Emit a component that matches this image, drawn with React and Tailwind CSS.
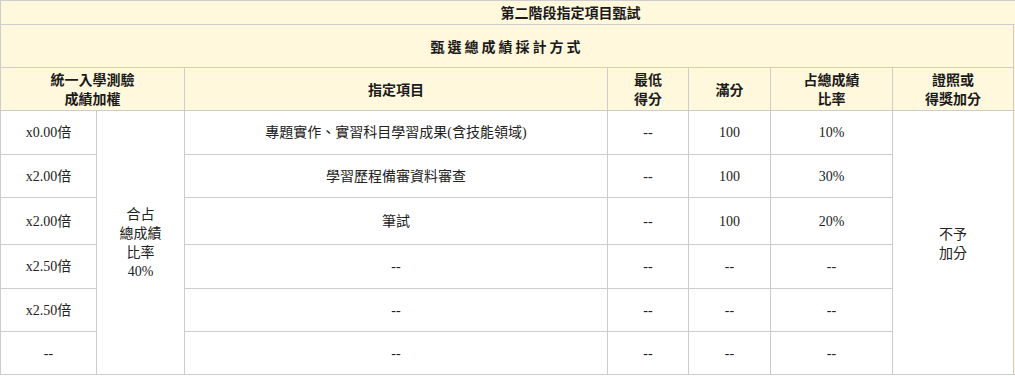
import React from "react";

const B = "border border-[#cccccc]";
const H = `${B} bg-[#fff8dc] font-bold text-[#1a1a1a] text-center align-middle`;
const C = `${B} bg-white text-center align-middle text-[#222]`;

const rows = [
  { w: "x0.00倍", item: "專題實作、實習科目學習成果(含技能領域)", min: "--", full: "100", pct: "10%", h: "h-[44px]" },
  { w: "x2.00倍", item: "學習歷程備審資料審查", min: "--", full: "100", pct: "30%", h: "h-[43px]" },
  { w: "x2.00倍", item: "筆試", min: "--", full: "100", pct: "20%", h: "h-[47px]" },
  { w: "x2.50倍", item: "--", min: "--", full: "--", pct: "--", h: "h-[44px]" },
  { w: "x2.50倍", item: "--", min: "--", full: "--", pct: "--", h: "h-[43px]" },
  { w: "--", item: "--", min: "--", full: "--", pct: "--", h: "h-[43px]" },
];

export default function App() {
  return (
    <div
      className="w-[1015px] h-[376px] overflow-hidden bg-white text-[14px] leading-[19px]"
      style={{ fontFamily: '"Liberation Serif", "Noto Sans CJK TC", serif' }}
    >
      <table className="table-fixed border-collapse w-[1140px]">
        <colgroup>
          <col className="w-[96px]" />
          <col className="w-[88px]" />
          <col className="w-[423px]" />
          <col className="w-[81px]" />
          <col className="w-[82px]" />
          <col className="w-[122px]" />
          <col className="w-[121px]" />
          <col className="w-[127px]" />
        </colgroup>
        <tbody>
          <tr>
            <td colSpan={8} className={`${H} h-[24px]`} style={{ fontFamily: '"Noto Sans CJK TC", sans-serif' }}>
              第二階段指定項目甄試
            </td>
          </tr>
          <tr>
            <td colSpan={7} className={`${H} h-[43px] tracking-[3px]`} style={{ fontFamily: '"Noto Sans CJK TC", sans-serif' }}>
              甄選總成績採計方式
            </td>
            <td rowSpan={2} className={H}></td>
          </tr>
          <tr style={{ fontFamily: '"Noto Sans CJK TC", sans-serif' }}>
            <td colSpan={2} className={`${H} h-[43px]`}>
              統一入學測驗
              <br />
              成績加權
            </td>
            <td className={H}>指定項目</td>
            <td className={H}>
              最低
              <br />
              得分
            </td>
            <td className={H}>滿分</td>
            <td className={H}>
              占總成績
              <br />
              比率
            </td>
            <td className={H}>
              證照或
              <br />
              得獎加分
            </td>
          </tr>
          {rows.map((r, i) => (
            <tr key={i}>
              <td className={`${C} ${r.h}`}>{r.w}</td>
              {i === 0 && (
                <td rowSpan={6} className={C} style={{ fontFamily: '"Noto Sans CJK TC", sans-serif' }}>
                  合占
                  <br />
                  總成績
                  <br />
                  比率
                  <br />
                  <span style={{ fontFamily: '"Liberation Serif", serif' }}>40%</span>
                </td>
              )}
              <td className={C}>{r.item}</td>
              <td className={C}>{r.min}</td>
              <td className={C}>{r.full}</td>
              <td className={C}>{r.pct}</td>
              {i === 0 && (
                <>
                  <td rowSpan={6} className={C} style={{ fontFamily: '"Noto Sans CJK TC", sans-serif' }}>
                    不予
                    <br />
                    加分
                  </td>
                  <td rowSpan={6} className={`${B} bg-[#fff8dc]`}></td>
                </>
              )}
            </tr>
          ))}
        </tbody>
      </table>
    </div>
  );
}
